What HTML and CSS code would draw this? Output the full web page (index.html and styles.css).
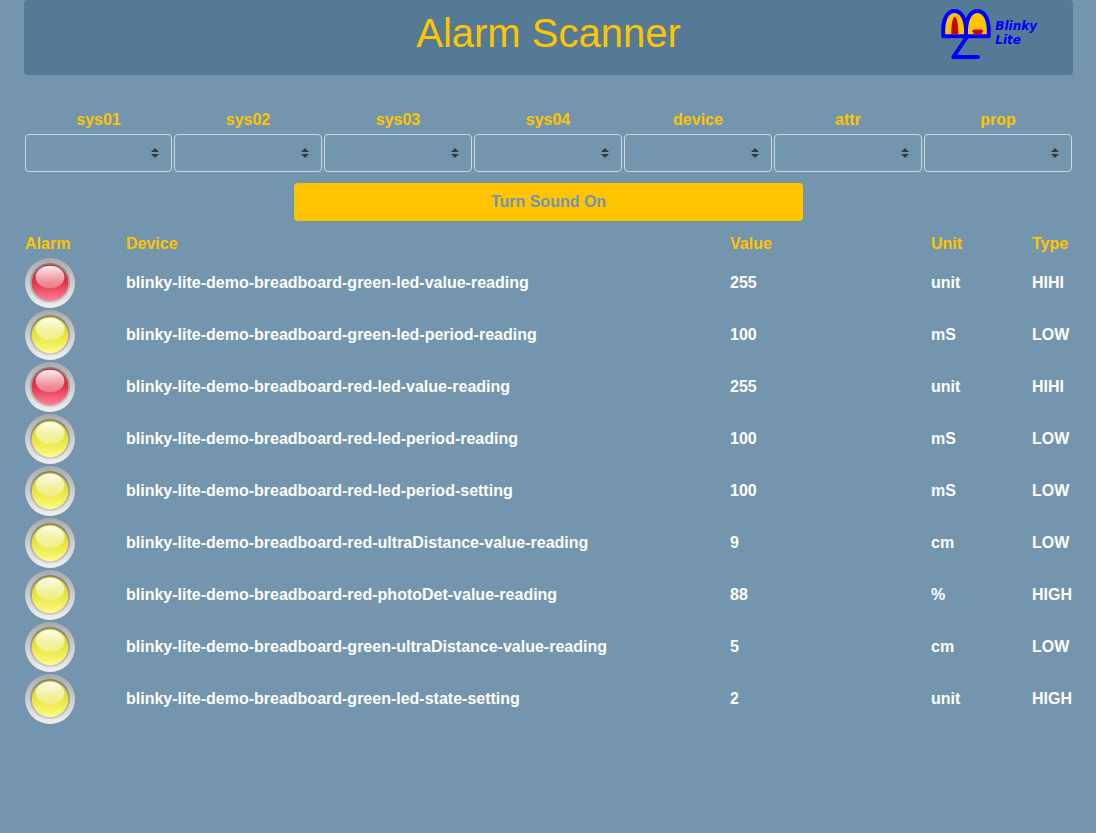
FILE: index.html
```html
<!DOCTYPE html>
<html lang="en">
<head>
<meta charset="utf-8">
<title>Alarm Scanner</title>
<link rel="stylesheet" href="styles.css">
</head>
<body>
<svg class="defs" width="0" height="0" aria-hidden="true">
  <defs>
    <linearGradient id="rim" x1="0" y1="0" x2="0" y2="1"><stop offset="0" stop-color="#a9a9a9"/><stop offset="1" stop-color="#f0f0f0"/></linearGradient>
    <linearGradient id="well" x1="0" y1="0" x2="0" y2="1"><stop offset="0" stop-color="#7c7c7c"/><stop offset="1" stop-color="#cccccc"/></linearGradient>
    <linearGradient id="redFill" x1="0" y1="0" x2="0" y2="1"><stop offset="0" stop-color="#d8101c"/><stop offset=".5" stop-color="#e2364a"/><stop offset="1" stop-color="#ff8097"/></linearGradient>
    <linearGradient id="yellowFill" x1="0" y1="0" x2="0" y2="1"><stop offset="0" stop-color="#d8d400"/><stop offset=".5" stop-color="#e6e43c"/><stop offset="1" stop-color="#fdfc86"/></linearGradient>
    <linearGradient id="shine" x1="0" y1="0" x2="0" y2="1"><stop offset="0" stop-color="#fff" stop-opacity=".94"/><stop offset="1" stop-color="#fff" stop-opacity=".27"/></linearGradient>
    <symbol id="lamp" viewBox="0 0 50 50">
      <circle cx="25" cy="25" r="25" fill="url(#rim)"/>
      <circle cx="25" cy="25" r="20" fill="url(#well)"/>
    </symbol>
    <symbol id="red" viewBox="0 0 50 50">
      <use href="#lamp"/>
      <circle cx="25" cy="25" r="18.2" fill="url(#redFill)"/>
      <ellipse cx="25" cy="19" rx="14.4" ry="11.3" fill="url(#shine)"/>
    </symbol>
    <symbol id="yellow" viewBox="0 0 50 50">
      <use href="#lamp"/>
      <circle cx="25" cy="25" r="18.2" fill="url(#yellowFill)"/>
      <ellipse cx="25" cy="19" rx="14.4" ry="11.3" fill="url(#shine)"/>
    </symbol>
    <symbol id="arrows" viewBox="0 0 4 5"><path d="M2 0L0 2h4zm0 5L0 3h4z" fill="#343a40"/></symbol>
  </defs>
</svg>
<header class="banner">
  <h1 class="title">Alarm Scanner</h1>
  <div class="brand">
    <svg class="logo" width="52" height="52" viewBox="0 0 52 52">
      <g stroke="#00f" stroke-width="4" stroke-linejoin="round" stroke-linecap="round">
        <path d="M3.2 28.2V22C3.4 9 8.7 3 14.5 3S25.8 9 26 22v6.2z" fill="#ffc400"/>
        <path d="M26 28.2V22C26.3 9 31.6 3 37.4 3S48.6 9 48.8 22v6.2z" fill="#ffc400"/>
        <path d="M26.5 29.5L13.3 49H38" fill="none"/>
      </g>
      <path d="M11.3 26C11.3 17 12.4 9 14.7 9S18.2 17 18.2 26z" fill="#c80000"/>
      <path d="M34 26l-1.6-2.8q0-1.8 2-1.8h6.6q2 0 2 1.8L41.5 26z" fill="#c80000"/>
    </svg>
    <div class="brand-name">Blinky<br>Lite</div>
  </div>
</header>
<main class="content">
  <section class="filters">
    <div class="filter"><span>sys01</span><div class="select"><svg width="8" height="10"><use href="#arrows"/></svg></div></div>
    <div class="filter"><span>sys02</span><div class="select"><svg width="8" height="10"><use href="#arrows"/></svg></div></div>
    <div class="filter"><span>sys03</span><div class="select"><svg width="8" height="10"><use href="#arrows"/></svg></div></div>
    <div class="filter"><span>sys04</span><div class="select"><svg width="8" height="10"><use href="#arrows"/></svg></div></div>
    <div class="filter"><span>device</span><div class="select"><svg width="8" height="10"><use href="#arrows"/></svg></div></div>
    <div class="filter"><span>attr</span><div class="select"><svg width="8" height="10"><use href="#arrows"/></svg></div></div>
    <div class="filter"><span>prop</span><div class="select"><svg width="8" height="10"><use href="#arrows"/></svg></div></div>
  </section>
  <button class="sound">Turn Sound On</button>
  <section class="alarms">
    <div class="row head"><span>Alarm</span><span>Device</span><span>Value</span><span>Unit</span><span>Type</span></div>
    <div class="row"><svg class="led"><use href="#red"/></svg><span>blinky-lite-demo-breadboard-green-led-value-reading</span><span>255</span><span>unit</span><span>HIHI</span></div>
    <div class="row"><svg class="led"><use href="#yellow"/></svg><span>blinky-lite-demo-breadboard-green-led-period-reading</span><span>100</span><span>mS</span><span>LOW</span></div>
    <div class="row"><svg class="led"><use href="#red"/></svg><span>blinky-lite-demo-breadboard-red-led-value-reading</span><span>255</span><span>unit</span><span>HIHI</span></div>
    <div class="row"><svg class="led"><use href="#yellow"/></svg><span>blinky-lite-demo-breadboard-red-led-period-reading</span><span>100</span><span>mS</span><span>LOW</span></div>
    <div class="row"><svg class="led"><use href="#yellow"/></svg><span>blinky-lite-demo-breadboard-red-led-period-setting</span><span>100</span><span>mS</span><span>LOW</span></div>
    <div class="row"><svg class="led"><use href="#yellow"/></svg><span>blinky-lite-demo-breadboard-red-ultraDistance-value-reading</span><span>9</span><span>cm</span><span>LOW</span></div>
    <div class="row"><svg class="led"><use href="#yellow"/></svg><span>blinky-lite-demo-breadboard-red-photoDet-value-reading</span><span>88</span><span>%</span><span>HIGH</span></div>
    <div class="row"><svg class="led"><use href="#yellow"/></svg><span>blinky-lite-demo-breadboard-green-ultraDistance-value-reading</span><span>5</span><span>cm</span><span>LOW</span></div>
    <div class="row"><svg class="led"><use href="#yellow"/></svg><span>blinky-lite-demo-breadboard-green-led-state-setting</span><span>2</span><span>unit</span><span>HIGH</span></div>
  </section>
</main>
</body>
</html>
```

FILE: styles.css
```css
* { box-sizing: border-box; }
body {
  margin: 0;
  min-height: 100vh;
  background: #7395ae;
  color: #fff;
  font: bold 16px/24px "Liberation Sans", Arial, sans-serif;
}
.defs { position: absolute; }
.banner {
  display: grid;
  grid-template-columns: 1fr auto 1fr;
  height: 75px;
  margin: 0 23px 0 24px;
  background: #557a95;
  border-radius: 4px;
}
.title {
  grid-column: 2;
  margin: 9px 0 0;
  color: #ffc400;
  font-size: 40px;
  font-weight: 400;
  line-height: 48px;
}
.brand {
  display: flex;
  justify-self: end;
  gap: 3px;
  padding: 8px 36px 0 0;
}
.brand-name {
  margin-top: 11px;
  color: #00f;
  font: italic bold 12px/14px "DejaVu Sans", sans-serif;
}
.content { margin: 33px 24px 0 25px; }
.filters {
  display: grid;
  grid-template-columns: 147px repeat(6, 148px);
  gap: 2px;
  color: #ffc400;
  text-align: center;
}
.select {
  display: flex;
  align-items: center;
  justify-content: flex-end;
  height: 38px;
  margin-top: 2px;
  padding-right: 12px;
  border: 1px solid #ced4da;
  border-radius: 4px;
}
.sound {
  display: block;
  width: 509px;
  height: 38px;
  margin: 11px auto 10px;
  padding: 0;
  border: 0;
  border-radius: 4px;
  background: #ffc400;
  color: #7395ae;
  font: inherit;
}
.row {
  display: grid;
  grid-template-columns: 101px 604px 201px 101px auto;
  height: 52px;
  align-items: center;
  white-space: nowrap;
}
.row span { padding-bottom: 1px; }
.row.head { height: 26px; color: #ffc400; }
.row.head span { padding: 0; }
.led { width: 50px; height: 50px; }
```
